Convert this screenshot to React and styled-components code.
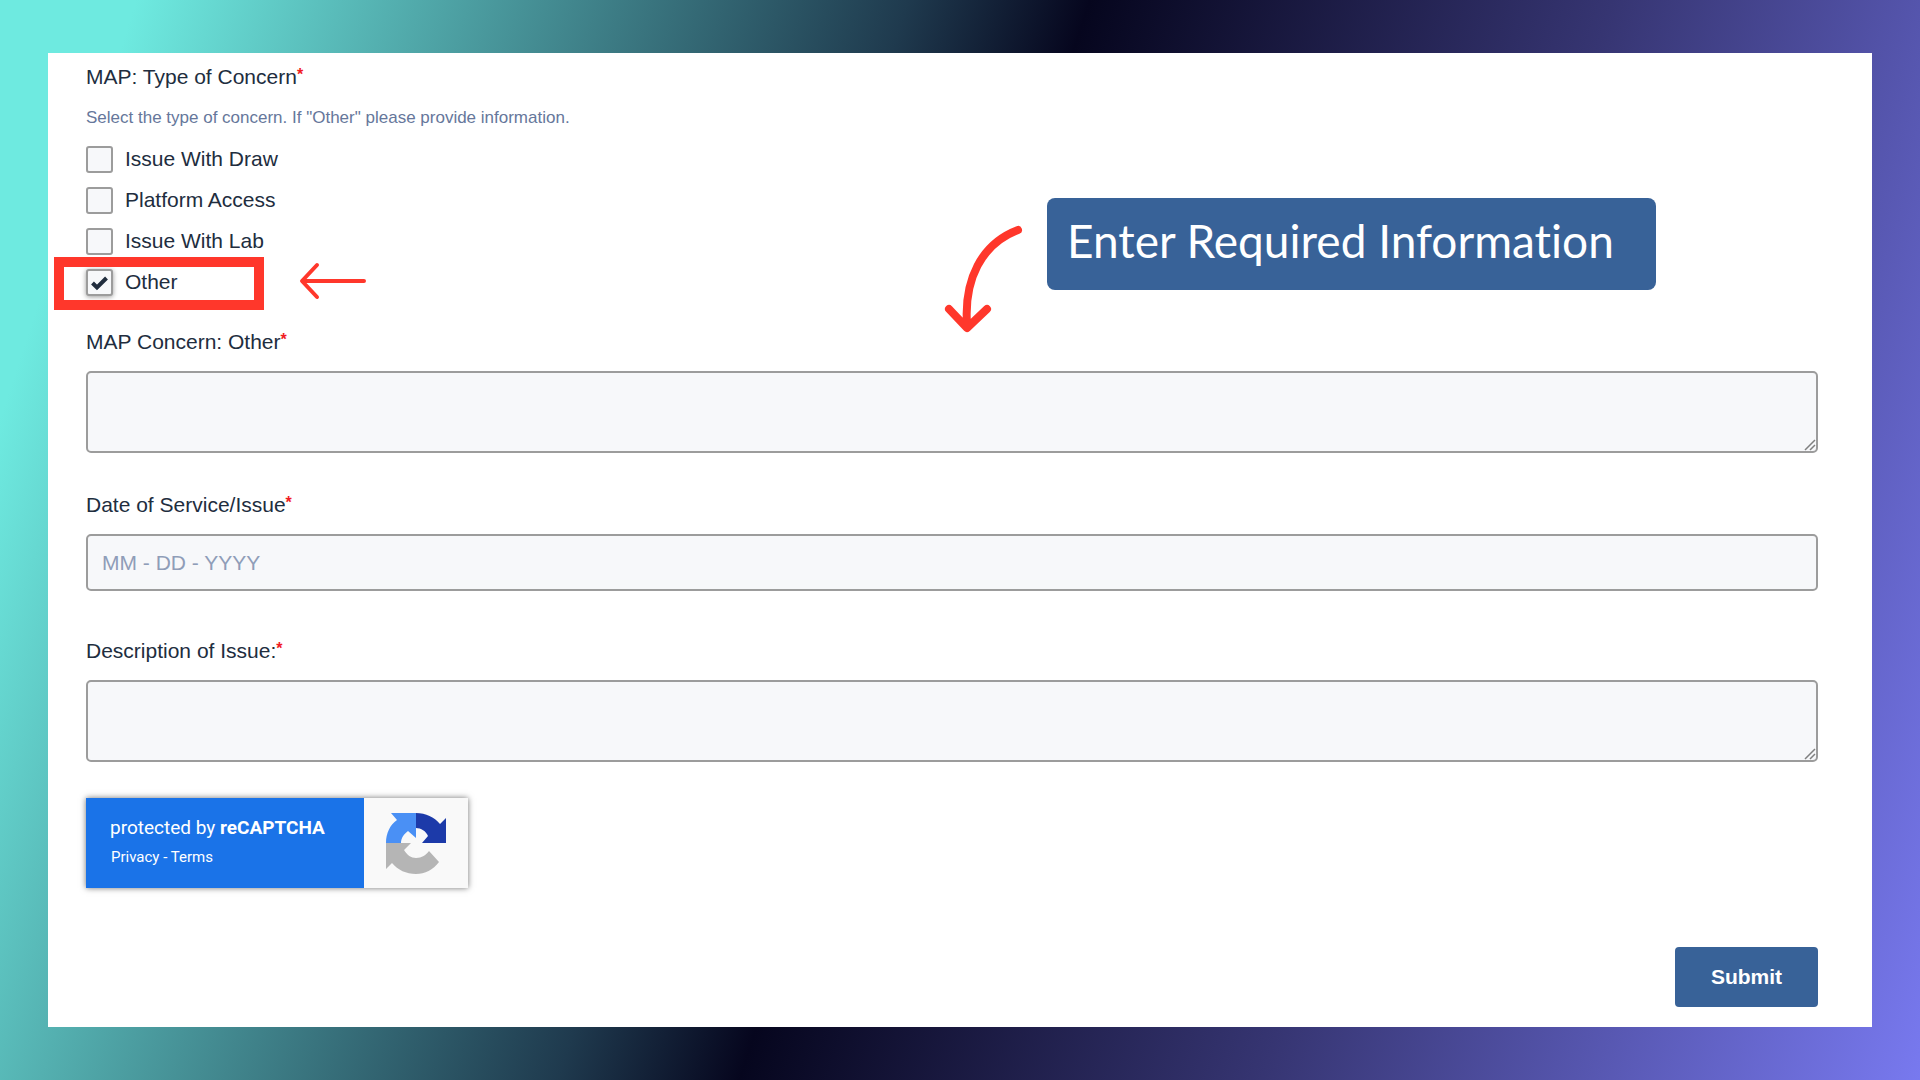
import React, { useState } from 'react';
import styled, { createGlobalStyle } from 'styled-components';

const concerns = ['Issue With Draw', 'Platform Access', 'Issue With Lab', 'Other'];

function Arrow() {
    return (
        <svg width="68" height="38" viewBox="0 0 68 38" fill="none" aria-hidden="true">
            <path
                d="M65 19H4M18 3L3 19L18 35"
                stroke="#ff372b"
                strokeWidth="4"
                strokeLinecap="round"
                strokeLinejoin="round"
            />
        </svg>
    );
}

function CurvedArrow() {
    return (
        <svg width="80" height="110" viewBox="0 0 80 110" fill="none" aria-hidden="true">
            <path
                d="M75 6C38 20 21 56 24 100M6 85L24 104L44 85"
                stroke="#ff372b"
                strokeWidth="8"
                strokeLinecap="round"
                strokeLinejoin="round"
            />
        </svg>
    );
}

function CaptchaLogo() {
    return (
        <svg width="62" height="62" viewBox="0 0 62 62" aria-hidden="true">
            <path
                fill="#4a90f5"
                d="M31 1V26L23 19C19 22 16 26 16 31H1C1 21 5 13 12 8L6 1Z"
            />
            <path
                fill="#1c3aa9"
                d="M31 1C41 1 49 5 55 12L61 6V31H37L43 24C41 19 36 16 31 16Z"
            />
            <path
                fill="#b5b5b5"
                d="M1 31H26L19 38C22 43 26 46 31 46C37 46 41 43 44 39L54 50C48 58 40 62 31 62C21 62 13 58 7 51L1 57Z"
            />
        </svg>
    );
}

function Label({ htmlFor, children }) {
    return (
        <FieldLabel htmlFor={htmlFor}>
            {children}<Required>*</Required>
        </FieldLabel>
    );
}

function App() {
    const [checked, setChecked] = useState(['Other']);

    const toggle = (name) => {
        setChecked(
            checked.includes(name)
                ? checked.filter((item) => item !== name)
                : [...checked, name]
        );
    };

    return (
        <Page>
            <GlobalStyle />
            <Panel onSubmit={(e) => e.preventDefault()}>
                <ConcernGroup>
                    <Legend>
                        MAP: Type of Concern<Required>*</Required>
                    </Legend>
                    <Hint>Select the type of concern. If "Other" please provide information.</Hint>
                    <Options>
                        {concerns.map((name) => (
                            <Option key={name}>
                                <Checkbox
                                    type="checkbox"
                                    checked={checked.includes(name)}
                                    onChange={() => toggle(name)}
                                />
                                {name}
                                {name === 'Other' && <Highlight><Arrow /></Highlight>}
                            </Option>
                        ))}
                    </Options>
                </ConcernGroup>

                <Field $gap={40}>
                    <Label htmlFor="other">MAP Concern: Other</Label>
                    <TextArea id="other" />
                </Field>

                <Field $gap={48}>
                    <Label htmlFor="date">Date of Service/Issue</Label>
                    <DateInput id="date" type="text" placeholder="MM - DD - YYYY" />
                </Field>

                <Field $gap={36}>
                    <Label htmlFor="description">Description of Issue:</Label>
                    <TextArea id="description" />
                </Field>

                <Captcha>
                    <CaptchaText>
                        <CaptchaTitle>protected by <strong>reCAPTCHA</strong></CaptchaTitle>
                        <CaptchaLinks>
                            <a href="#privacy">Privacy</a> - <a href="#terms">Terms</a>
                        </CaptchaLinks>
                    </CaptchaText>
                    <CaptchaBadge>
                        <CaptchaLogo />
                    </CaptchaBadge>
                </Captcha>

                <Submit type="submit">Submit</Submit>

                {/* note over the form */}
                <Callout>
                    <CurvedArrow />
                    <CalloutText>Enter Required Information</CalloutText>
                </Callout>
            </Panel>
        </Page>
    );
}

export default App;

const GlobalStyle = createGlobalStyle`
    * {
        box-sizing: border-box;
    }

    body {
        margin: 0;
        font-family: "Liberation Sans", Arial, sans-serif;
        color: #212d3e;
    }
`;

const Page = styled.div`
    min-height: 100vh;
    padding: 53px 48px;
    background: linear-gradient(108deg, #6eeae0 6%, #1f3a4e 40%, #06061e 48%, #363572 71%, #7879ef 100%);
`;

const Panel = styled.form`
    position: relative;
    display: flex;
    flex-direction: column;
    padding: 12px 54px 20px 38px;
    background: #fff;
`;

const ConcernGroup = styled.fieldset`
    margin: 0 0 34px;
    padding: 0;
    border: 0;
`;

const Legend = styled.legend`
    padding: 0;
    font-size: 21px;
    line-height: 24px;
`;

const Hint = styled.p`
    margin: 18px 0 16px;
    font-size: 17px;
    line-height: 22px;
    color: #66779b;
`;

const Options = styled.div`
    display: flex;
    flex-direction: column;
    align-items: flex-start;
    gap: 13px;
`;

const Option = styled.label`
    position: relative;
    display: flex;
    align-items: center;
    gap: 12px;
    font-size: 21px;
    line-height: 28px;
`;

const Checkbox = styled.input`
    appearance: none;
    width: 27px;
    height: 27px;
    margin: 0;
    border: 2px solid #9c9c9c;
    border-radius: 3px;
    background: #f7f8fa;

    &:checked {
        background: #f7f8fa
            url("data:image/svg+xml,%3Csvg xmlns='http://www.w3.org/2000/svg' viewBox='0 0 23 23'%3E%3Cpath d='M4.500 12L9 16.500L18.500 7' fill='none' stroke='%23212d3e' stroke-width='4'/%3E%3C/svg%3E")
            center / 100% no-repeat;
        box-shadow: 0 1px 5px rgba(0, 0, 0, 0.4);
    }
`;

const Highlight = styled.span`
    position: absolute;
    top: -11px;
    left: -32px;
    width: 210px;
    height: 53px;
    border: 10px solid #ff372b;

    svg {
        position: absolute;
        top: -5px;
        left: 235px;
    }
`;

const Field = styled.div`
    display: flex;
    flex-direction: column;
    gap: 17px;
    margin-bottom: ${(props) => props.$gap}px;
`;

const FieldLabel = styled.label`
    font-size: 21px;
    line-height: 24px;
`;

const Required = styled.span`
    color: #f01c24;
    font-size: 16px;
    font-weight: bold;
    vertical-align: 4px;
    line-height: 1;
`;

const TextArea = styled.textarea`
    display: block;
    width: 100%;
    height: 82px;
    padding: 14px;
    border: 2px solid #9c9c9c;
    border-radius: 5px;
    background: #f7f8fa;
    font: inherit;
    font-size: 21px;
    resize: vertical;

    &::-webkit-resizer {
        background: url("data:image/svg+xml,%3Csvg xmlns='http://www.w3.org/2000/svg' viewBox='0 0 15 15'%3E%3Cpath d='M4 14L14 4M9 14L14 9' stroke='%23808080' stroke-width='1.500'/%3E%3C/svg%3E")
            center / 100% no-repeat;
    }
`;

const DateInput = styled.input`
    width: 100%;
    height: 57px;
    padding: 0 14px;
    border: 2px solid #9c9c9c;
    border-radius: 5px;
    background: #f7f8fa;
    font: inherit;
    font-size: 21px;

    &::placeholder {
        color: #8f9db8;
        opacity: 1;
    }
`;

const Captcha = styled.div`
    display: flex;
    align-self: flex-start;
    height: 90px;
    box-shadow: 0 0 6px rgba(0, 0, 0, 0.55);
    font-family: Roboto, sans-serif;
`;

const CaptchaText = styled.div`
    width: 278px;
    padding: 17px 24px;
    background: #1a73e8;
    color: #fff;
`;

const CaptchaTitle = styled.div`
    font-size: 19px;
    line-height: 26px;
    white-space: nowrap;

    strong {
        font-weight: 700;
    }
`;

const CaptchaLinks = styled.div`
    margin-top: 5px;
    padding-left: 1px;
    font-size: 15px;
    line-height: 22px;

    a {
        color: inherit;
        text-decoration: none;
    }
`;

const CaptchaBadge = styled.div`
    display: flex;
    align-items: center;
    justify-content: center;
    width: 104px;
    background: #f9f9f9;
`;

const Submit = styled.button`
    align-self: flex-end;
    width: 143px;
    height: 60px;
    margin-top: 59px;
    border: 0;
    border-radius: 4px;
    background: #386298;
    color: #fff;
    font: inherit;
    font-size: 21px;
    font-weight: bold;
`;

const Callout = styled.div`
    position: absolute;
    top: 145px;
    right: 216px;
    display: flex;
    align-items: flex-start;
    gap: 24px;

    svg {
        margin-top: 26px;
    }
`;

const CalloutText = styled.div`
    width: 609px;
    padding: 15px 20px 21px;
    border-radius: 8px;
    background: #386298;
    color: #fff;
    font-family: Lato, sans-serif;
    font-size: 46px;
    font-variant-ligatures: none;
    line-height: 56px;
    white-space: nowrap;
`;
